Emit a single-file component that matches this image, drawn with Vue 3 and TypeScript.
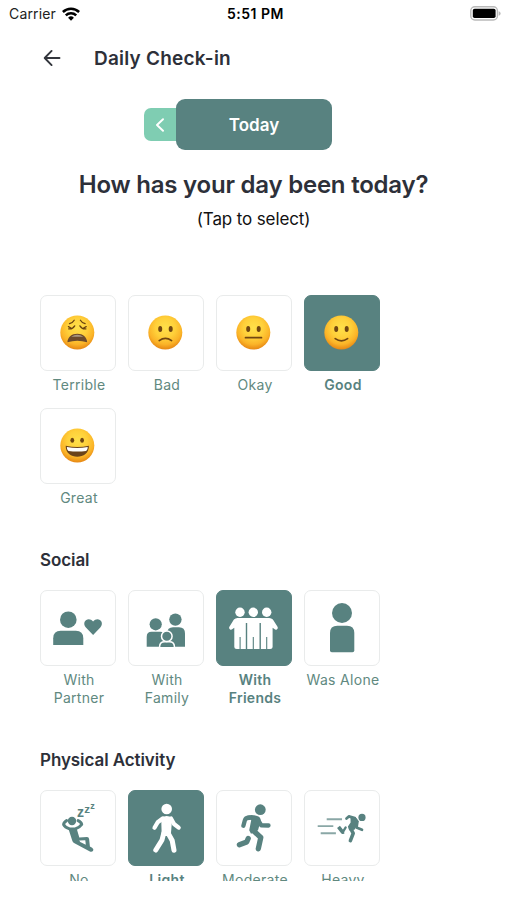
<script setup lang="ts">
import { ref } from 'vue'

interface Option {
  id: string
  label: string
}

interface Section {
  id: string
  title: string
  options: Option[]
}

const sections: Section[] = [
  {
    id: 'mood',
    title: '',
    options: [
      { id: 'terrible', label: 'Terrible' },
      { id: 'bad', label: 'Bad' },
      { id: 'okay', label: 'Okay' },
      { id: 'good', label: 'Good' },
      { id: 'great', label: 'Great' },
    ],
  },
  {
    id: 'social',
    title: 'Social',
    options: [
      { id: 'partner', label: 'With Partner' },
      { id: 'family', label: 'With Family' },
      { id: 'friends', label: 'With Friends' },
      { id: 'alone', label: 'Was Alone' },
    ],
  },
  {
    id: 'activity',
    title: 'Physical Activity',
    options: [
      { id: 'none', label: 'No' },
      { id: 'light', label: 'Light' },
      { id: 'moderate', label: 'Moderate' },
      { id: 'heavy', label: 'Heavy' },
    ],
  },
]

const selected = ref<Record<string, string>>({
  mood: 'good',
  social: 'friends',
  activity: 'light',
})

function choose(section: string, option: string): void {
  selected.value[section] = option
}
</script>

<template>
  <div class="screen">
    <div class="status">
      <div class="carrier">
        <span>Carrier</span>
        <svg width="18" height="14" viewBox="0 0 18 14">
          <g fill="none" stroke="#000" stroke-width="2.5">
            <path d="M0.900 5a11.600 11.600 0 0 1 16.200 0" />
            <path d="M3.800 8.300a7.400 7.400 0 0 1 10.400 0" />
          </g>
          <path d="M6.100 10.700a4.100 4.100 0 0 1 5.800 0L9 13.700z" />
        </svg>
      </div>
      <span class="time">5:51 PM</span>
      <svg class="battery" width="32" height="15" viewBox="0 0 32 15">
        <rect x="0.8" y="0.8" width="26.600" height="13.200" rx="4" fill="#fff" stroke="#b9b9b9" stroke-width="1.400" />
        <rect x="2.800" y="2.800" width="22.800" height="9.200" rx="1.800" />
        <path d="M28.600 5.200q2 .6 2 2.300t-2 2.300z" fill="#b9b9b9" />
      </svg>
    </div>

    <header class="header">
      <svg width="18" height="18" viewBox="0 0 18 18" fill="none" stroke="#33363d" stroke-width="1.900" stroke-linecap="round" stroke-linejoin="round">
        <path d="M16.500 9H1.900M8.600 1.900L1.700 9l6.900 7.100" />
      </svg>
      <h1>Daily Check-in</h1>
    </header>

    <div class="day">
      <button class="prev" aria-label="Previous day">
        <svg width="10" height="14" viewBox="0 0 10 14" fill="none" stroke="#fff" stroke-width="1.900" stroke-linecap="round" stroke-linejoin="round">
          <path d="M8 1.200L2 7l6 5.800" />
        </svg>
      </button>
      <button class="today">Today</button>
    </div>

    <h2 class="question">How has your day been today?</h2>
    <p class="hint">(Tap to select)</p>

    <main class="sections">
      <section v-for="s in sections" :key="s.id" :class="['section', s.id]">
        <h3 v-if="s.title">{{ s.title }}</h3>
        <div class="grid">
          <div
            v-for="o in s.options"
            :key="o.id"
            :class="['option', { active: selected[s.id] === o.id }]"
            @click="choose(s.id, o.id)"
          >
            <div class="tile">
              <svg v-if="s.id === 'mood'" viewBox="0 0 76 76" width="76" height="76">
                <defs>
                  <radialGradient :id="'face-' + o.id" cx="0.5" cy="0.36" r="0.65">
                    <stop offset="0" stop-color="#ffe04a" />
                    <stop offset="0.45" stop-color="#ffd03a" />
                    <stop offset="0.75" stop-color="#fbb428" />
                    <stop offset="1" stop-color="#e58412" />
                  </radialGradient>
                </defs>
                <circle cx="37.300" cy="37.500" r="17" :fill="`url(#face-${o.id})`" />
                <template v-if="o.id === 'terrible'">
                  <g fill="none" stroke="#6a4210" stroke-width="1.300" stroke-linecap="round">
                    <path d="M29.500 28.600q3.200-.8 4.700-3.400M45.100 28.600q-3.200-.8-4.700-3.400" />
                    <path d="M28.700 33.800q3.600.8 6-2.900M28.400 31.600l3 1.600M45.900 33.800q-3.600.8-6-2.900M46.200 31.600l-3 1.600" />
                  </g>
                  <path d="M27.400 47.200c.4-5.400 4.200-8.500 9.900-8.500s9.500 3.100 9.900 8.500q-9.900-3.100-19.800 0z" fill="#6c4b2c" />
                  <path d="M31.200 41.700q6-3.800 12.200 0z" fill="#a99882" />
                </template>
                <template v-else-if="o.id === 'great'">
                  <g fill="#714611">
                    <ellipse cx="32.300" cy="32.200" rx="1.900" ry="2.500" />
                    <ellipse cx="42.100" cy="32.200" rx="1.900" ry="2.500" />
                  </g>
                  <path d="M25.700 37.800q11.600 2.500 23.200 0c.3 7.200-5.600 11-11.600 11s-11.900-3.800-11.600-11z" fill="#6b431b" />
                  <path d="M26.900 39q10.400 2.100 20.800 0c0 2.300-.6 3.200-1.600 3.900q-8.800 1.300-17.600 0c-1-.7-1.600-1.600-1.600-3.900z" fill="#fff" />
                </template>
                <template v-else>
                  <g fill="#714611">
                    <ellipse cx="32.200" cy="34" rx="2" ry="2.900" />
                    <ellipse cx="42.700" cy="34" rx="2" ry="2.900" />
                  </g>
                  <g fill="none" stroke="#714611" stroke-width="1.700" stroke-linecap="round">
                    <path v-if="o.id === 'bad'" d="M31.200 45.600q6.200-4.600 12.400 0" />
                    <path v-else-if="o.id === 'okay'" d="M29.500 42.700h16" />
                    <path v-else d="M31.200 43.600q6.200 4.500 12.400 0" />
                  </g>
                </template>
              </svg>

              <svg v-else-if="o.id === 'partner'" viewBox="0 0 76 76" width="76" height="76" fill="currentColor">
                <circle cx="28.300" cy="29.700" r="8.300" />
                <path d="M13.200 55v-6.800q0-7.500 7.500-7.500h15.100q7.500 0 7.500 7.500V55z" />
                <path d="M53.100 45l-7.200-7.600c-5-5.500 2.700-11.600 7.200-5.800 4.500-5.800 12.200.3 7.200 5.800z" />
              </svg>

              <svg v-else-if="o.id === 'family'" viewBox="0 0 76 76" width="76" height="76" fill="currentColor">
                <circle cx="27.700" cy="34.300" r="6.100" />
                <circle cx="47.400" cy="29.600" r="6.200" />
                <path d="M18.700 56.700v-10q0-5 5-5h8.500q4 0 5 4v11z" />
                <path d="M39 56.700V43.300q.3-6 6-6h6q6 0 6 6v13.400z" />
                <g stroke="#fff" stroke-width="1.500">
                  <path d="M31.600 58v-1.300q0-5 5-5h4.800q5 0 5 5V58z" />
                  <circle cx="38.800" cy="46.300" r="5.300" />
                </g>
                <path d="M30 57h18v3H30z" fill="#fff" />
              </svg>

              <svg v-else-if="o.id === 'friends'" viewBox="0 0 76 76" width="76" height="76" fill="currentColor">
                <circle cx="24" cy="22.300" r="4.700" />
                <circle cx="37.300" cy="22.300" r="4.700" />
                <circle cx="50.700" cy="22.300" r="4.700" />
                <path d="M21.500 28h31.700q2.200 0 3.700 1.600l4.600 7.200q.8 1.800-.7 2.700-1.300.7-2.400-.4l-1.800-1.300V57q0 2-2.400 2H20.700q-2.400 0-2.400-2V37.800L16.500 39q-1.300 1-2.400.4-1.500-.9-.7-2.700l4.500-7.100q1.500-1.600 3.600-1.600z" />
                <path class="seam" d="M30.500 33v27M44.200 33v27" />
                <path class="seam thin" d="M24.100 47v13M37.300 47v13M50.700 47v13" />
              </svg>

              <svg v-else-if="o.id === 'alone'" viewBox="0 0 76 76" width="76" height="76" fill="currentColor">
                <circle cx="38" cy="23" r="10" />
                <path d="M26 43q0-7.300 7.300-7.300H43q7.300 0 7.300 7.300v17.500q0 1.800-1.800 1.800H27.800q-1.800 0-1.800-1.800z" />
              </svg>

              <svg v-else-if="o.id === 'none'" viewBox="0 0 76 76" width="76" height="76" fill="currentColor">
                <circle cx="32" cy="31" r="4.200" />
                <path d="M28.200 38h8.300l2.800 9.400 7.700-.3q1.900 0 2.100 1.900l.8 7.600 2.200 1.100q2 1.300 1 3-1 1.700-3.200.9L34.500 53.200q-1.800-.8-2.300-2.800z" />
                <path d="M39.200 50.400l6.100-.2.500 4.500-5.600-2.700z" fill="#fff" />
                <path d="M26.600 30.600q-2.900 1.700-3 4.100 1.300 2.700 6 4.200h5.800q4.500-1.700 6.300-4.400-.3-2.300-3.600-3.900" fill="none" stroke="currentColor" stroke-width="3" stroke-linecap="round" stroke-linejoin="round" />
                <g class="snore">
                  <text x="37" y="27.300" font-size="14">z</text>
                  <text x="44.300" y="22.700" font-size="11.500">z</text>
                  <text x="50.300" y="18.500" font-size="9">z</text>
                </g>
              </svg>

              <svg v-else-if="o.id === 'light'" viewBox="0 0 76 76" width="76" height="76" fill="currentColor">
                <circle cx="38.700" cy="19" r="5.300" />
                <path d="M33.200 27.500q5.500-3 11 0L43 43l-1.500 3h-7.800z" />
                <g fill="none" stroke="currentColor" stroke-width="4.200" stroke-linecap="round" stroke-linejoin="round">
                  <path d="M34.700 28.500l-5 3.700-3.200 5.600M43 28.500l3 5.500 4.700 3.600" />
                  <path d="M35.800 43l-1.800 7-6.200 10M40 43l4.200 7.500L46 60.200" stroke-width="5" />
                </g>
              </svg>

              <svg v-else-if="o.id === 'moderate'" viewBox="0 0 76 76" width="76" height="76" fill="currentColor">
                <circle cx="44.300" cy="19.700" r="5.400" />
                <path d="M31 25.700q5.500-1.600 11.500.7 2.800 1.600 2 5.100L42 40.200l-7 3.500-1.800-3.500 2-10z" />
                <g fill="none" stroke="currentColor" stroke-linecap="round" stroke-linejoin="round">
                  <path d="M34 27.800q-4.400-.4-5.200 2.700l-1.400 5.200M41.800 29.500l3.500 5.800 7.200.2" stroke-width="4.300" />
                  <path d="M38 41.200l6.800 6.300-2.500 11.300M32.200 48.500l-1.500 3.500-7.300 2.800" stroke-width="5.300" />
                </g>
              </svg>

              <svg v-else viewBox="0 0 76 76" width="76" height="76" fill="currentColor">
                <circle cx="58" cy="27.400" r="3.600" />
                <path d="M46.500 27.500l6 .5 2.500 3.500-4.500 8.300-5.300.6-1.300-4 2.700-4z" />
                <g fill="none" stroke="currentColor" stroke-linecap="round" stroke-linejoin="round">
                  <path d="M42.500 28.500l2.300-2.100 6 1.700M53.200 33l-.7 4.500 5.500 2.300" stroke-width="2.700" />
                  <path d="M46.500 38l2.700 5.400-2.800 7.200" stroke-width="3.600" />
                  <path d="M40 41.800l-1.400.4-4.100-5.400" stroke-width="3.600" stroke-linecap="butt" />
                  <path d="M38.800 42.200l2.800-4.700" stroke-width="2.400" />
                  <path d="M22.700 29.200H38M13.700 36.100h15.600M16.700 43.300h15.200" stroke-width="1.900" stroke-linecap="butt" opacity="0.7" />
                </g>
              </svg>
            </div>
            <div class="label">{{ o.label }}</div>
          </div>
        </div>
      </section>
    </main>
  </div>
</template>

<style>
body {
  background: #fff;
}
</style>

<style scoped>
.screen {
  width: 507px;
  height: 881px;
  overflow: hidden;
  background: #fff;
  font-family: Inter, "Liberation Sans", sans-serif;
  color: #2d3039;
}

.status {
  display: grid;
  grid-template-columns: 1fr auto 1fr;
  align-items: center;
  height: 27px;
  padding: 0 5px 0 9px;
  color: #000;
  font-size: 14px;
}

.carrier {
  display: flex;
  align-items: center;
  gap: 6px;
  color: #222;
  letter-spacing: 0.15px;
}

.time {
  font-weight: 600;
  letter-spacing: 0.5px;
}

.battery {
  justify-self: end;
}

.header {
  display: flex;
  align-items: center;
  gap: 33px;
  height: 62px;
  padding-left: 43px;
}

h1,
h2,
h3,
p {
  margin: 0;
}

h1 {
  font-size: 19px;
  font-weight: 600;
  letter-spacing: 0.22px;
}

.day {
  display: flex;
  align-items: center;
  height: 51px;
  margin: 10px 0 0 144px;
}

button {
  border: 0;
  padding: 0;
  font-family: inherit;
  color: #fff;
}

.prev {
  display: flex;
  align-items: center;
  width: 40px;
  height: 33px;
  margin-right: -8px;
  padding-left: 11px;
  border-radius: 7px;
  background: #7fcdb2;
}

.today {
  position: relative;
  width: 156px;
  height: 51px;
  border-radius: 9px;
  background: #588280;
  font-size: 17px;
  font-weight: 600;
}

.question {
  margin-top: 19px;
  line-height: 32px;
  font-size: 24px;
  font-weight: 600;
  letter-spacing: -0.22px;
  text-align: center;
}

.hint {
  margin-top: 6px;
  line-height: 24px;
  font-size: 17px;
  letter-spacing: -0.12px;
  text-align: center;
  color: #111;
}

.sections {
  padding: 64px 0 0 40px;
}

.section + .section {
  margin-top: 39px;
}

h3 {
  height: 44px;
  line-height: 29px;
  font-size: 17px;
  font-weight: 600;
  letter-spacing: -0.08px;
}

.grid {
  display: grid;
  grid-template-columns: repeat(4, 76px);
  column-gap: 12px;
  row-gap: 14px;
}

.activity .grid {
  height: 99px;
}

.option {
  cursor: pointer;
}

.social .option {
  height: 117px;
}

.tile {
  box-sizing: border-box;
  display: grid;
  place-content: center;
  width: 76px;
  height: 76px;
  border: 1.5px solid #e9ebeb;
  border-radius: 7px;
  background: #fff;
  color: #588280;
}

.active .tile {
  border-color: #588280;
  background: #588280;
  color: #fff;
}

.label {
  width: 78px;
  margin-top: 5px;
  line-height: 18px;
  font-size: 14px;
  letter-spacing: 0.3px;
  text-align: center;
  color: #61897f;
}

.active .label {
  font-weight: 600;
  color: #588280;
}

.seam {
  fill: none;
  stroke: #588280;
  stroke-width: 1.4;
}

.seam.thin {
  stroke-width: 1.1;
}

.snore {
  font-family: "Liberation Sans", sans-serif;
  font-weight: 700;
}
</style>
